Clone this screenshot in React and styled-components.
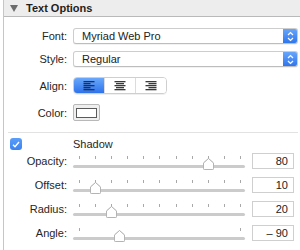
import React from 'react'
import styled, { createGlobalStyle } from 'styled-components'

const Global = createGlobalStyle`
  html, body { margin: 0; padding: 0; background: #fff; }
  body { font-family: "Liberation Sans", Arial, sans-serif; font-size: 11px; color: #262626; }
`

const Panel = styled.div`
  margin-left: 3px;
  width: 297px;
  height: 250px;
  border-left: 1px solid #c6c6c6;
  box-sizing: border-box;
  background: #fff;
  overflow: hidden;
`

const Header = styled.div`
  height: 16px;
  background: #ededed;
  border-bottom: 1px solid #b9b9b9;
  display: flex;
  align-items: center;
  padding-left: 6px;
  gap: 8px;
`

const Title = styled.span`
  font-weight: bold;
  font-size: 11px;
  color: #1e1e1e;
`

const Form = styled.div`
  display: flex;
  flex-direction: column;
  padding-right: 2px;
`

const Row = styled.div`
  display: grid;
  grid-template-columns: 63px 1fr;
  column-gap: 6px;
  align-items: center;
  height: ${p => p.$h || 16}px;
  margin-top: ${p => p.$top}px;
`

const Label = styled.span`
  text-align: right;
  white-space: nowrap;
`

const Popup = styled.div`
  display: flex;
  align-items: center;
  height: 16px;
  border: 1px solid #cdcdcd;
  border-bottom-color: #bdbdbd;
  border-radius: 3px;
  box-sizing: border-box;
  background: #fff;
  box-shadow: 0 1px 0 rgba(0,0,0,0.05);
  overflow: hidden;
`

const PopupText = styled.span`
  flex: 1;
  padding-left: 8px;
  color: #222;
`

const Arrows = styled.span`
  width: 14px;
  height: 100%;
  display: flex;
  align-items: center;
  justify-content: center;
  background: linear-gradient(#67a6fb, #2f76ee);
`

const Segmented = styled.div`
  display: flex;
  width: 94px;
  height: 17px;
  border: 1px solid #cfcfcf;
  border-radius: 4px;
  box-sizing: border-box;
  overflow: hidden;
  box-shadow: 0 1px 0 rgba(0,0,0,0.06);
`

const Segment = styled.div`
  flex: 1;
  display: flex;
  align-items: center;
  justify-content: center;
  background: ${p => p.$on ? 'linear-gradient(#69a8fb, #2e72ec)' : '#fff'};
  & + & { border-left: 1px solid #dcdcdc; }
`

const Swatch = styled.div`
  width: 27px;
  height: 17px;
  box-sizing: border-box;
  border: 1px solid #b8b8b8;
  border-radius: 2px;
  background: #efefef;
  display: flex;
  align-items: center;
  justify-content: center;
`

const SwatchInner = styled.div`
  width: 19px;
  height: 8px;
  border: 1px solid #5a5a5a;
  background: #fff;
`

const Separator = styled.div`
  height: 1px;
  background: #e2e2e2;
  margin: 11px 0 0 4px;
`

const ShadowRow = styled.div`
  display: grid;
  grid-template-columns: 63px 1fr;
  column-gap: 6px;
  align-items: center;
  height: 12px;
  margin-top: 5px;
`

const Check = styled.div`
  width: 12px;
  height: 12px;
  margin-left: 6px;
  border-radius: 3px;
  background: linear-gradient(#5b9ef8, #3a82f2);
  display: flex;
  align-items: center;
  justify-content: center;
`

const SliderLine = styled.div`
  display: flex;
  align-items: center;
  gap: 7px;
`

const Slider = styled.div`
  position: relative;
  width: 172px;
  height: 16px;
`

const Ticks = styled.div`
  display: flex;
  justify-content: space-between;
  padding: 3px 4px 0 6px;
`

const Tick = styled.span`
  width: 1px;
  height: 3px;
  background: #a8a8a8;
`

const Track = styled.div`
  margin-top: 6px;
  height: 3px;
  border-radius: 2px;
  background: #cbcbcb;
`

const Thumb = styled.svg`
  position: absolute;
  top: 5px;
  filter: drop-shadow(0 0.5px 0.5px rgba(0,0,0,0.25));
`

const Field = styled.div`
  width: 42px;
  height: 16px;
  box-sizing: border-box;
  border: 1px solid #cfcfcf;
  text-align: right;
  padding-right: 5px;
  line-height: 14px;
  color: #222;
`

const AlignIcon = ({ mode, color }) => {
  const lens = [10, 8, 10, 8, 10]
  return (
    <svg width="12" height="10" viewBox="0 0 12 10">
      {lens.map((l, i) => {
        const w = i % 2 ? (mode === 'left' ? 7 : 8) : 11
        const x = mode === 'left' ? 0.5 : mode === 'right' ? 11.5 - w : (12 - w) / 2
        return <rect key={i} x={x} y={i * 2} width={w} height="1.3" fill={color} />
      })}
    </svg>
  )
}

const SliderRow = ({ label, value, frac, ticks = 11, top }) => (
  <Row $top={top}>
    <Label>{label}</Label>
    <SliderLine>
      <Slider>
        <Ticks>
          {Array.from({ length: ticks }).map((_, i) => <Tick key={i} />)}
        </Ticks>
        <Track />
        <Thumb width="11" height="12" viewBox="0 0 11 12" style={{ left: 6 + frac * 162 - 5.5 }}>
          <path d="M0.5 5 L5.5 0.5 L10.5 5 V10.5 Q10.5 11.5 9.5 11.5 H1.5 Q0.5 11.5 0.5 10.5 Z" fill="#fff" stroke="#b4b4b4" />
        </Thumb>
      </Slider>
      <Field>{value}</Field>
    </SliderLine>
  </Row>
)

const PopupArrows = () => (
  <Arrows>
    <svg width="7" height="11" viewBox="0 0 7 11">
      <path d="M1 4 L3.5 1.5 L6 4 M1 7 L3.5 9.5 L6 7" fill="none" stroke="#fff" strokeWidth="1.2" />
    </svg>
  </Arrows>
)

export default function App() {
  return (
    <>
      <Global />
      <Panel>
        <Header>
          <svg width="8" height="7" viewBox="0 0 8 7">
            <path d="M0 0 H8 L4 7 Z" fill="#6c6c6c" />
          </svg>
          <Title>Text Options</Title>
        </Header>
        <Form>
          <Row $top={11}>
            <Label>Font:</Label>
            <Popup><PopupText>Myriad Web Pro</PopupText><PopupArrows /></Popup>
          </Row>
          <Row $top={7}>
            <Label>Style:</Label>
            <Popup><PopupText>Regular</PopupText><PopupArrows /></Popup>
          </Row>
          <Row $top={10} $h={17}>
            <Label>Align:</Label>
            <Segmented>
              <Segment $on><AlignIcon mode="left" color="#1f2f55" /></Segment>
              <Segment><AlignIcon mode="center" color="#3a3a3a" /></Segment>
              <Segment><AlignIcon mode="right" color="#3a3a3a" /></Segment>
            </Segmented>
          </Row>
          <Row $top={10} $h={17}>
            <Label>Color:</Label>
            <Swatch><SwatchInner /></Swatch>
          </Row>
          <Separator />
          <ShadowRow>
            <Check>
              <svg width="8" height="7" viewBox="0 0 8 7">
                <path d="M1 3.8 L3 5.8 L7 1" fill="none" stroke="#fff" strokeWidth="1.4" />
              </svg>
            </Check>
            <span>Shadow</span>
          </ShadowRow>
          <SliderRow label="Opacity:" value="80" frac={0.8} top={3} />
          <SliderRow label="Offset:" value="10" frac={0.1} top={8} />
          <SliderRow label="Radius:" value="20" frac={0.2} top={8} />
          <SliderRow label="Angle:" value="– 90" frac={0.25} ticks={2} top={8} />
        </Form>
      </Panel>
    </>
  )
}
